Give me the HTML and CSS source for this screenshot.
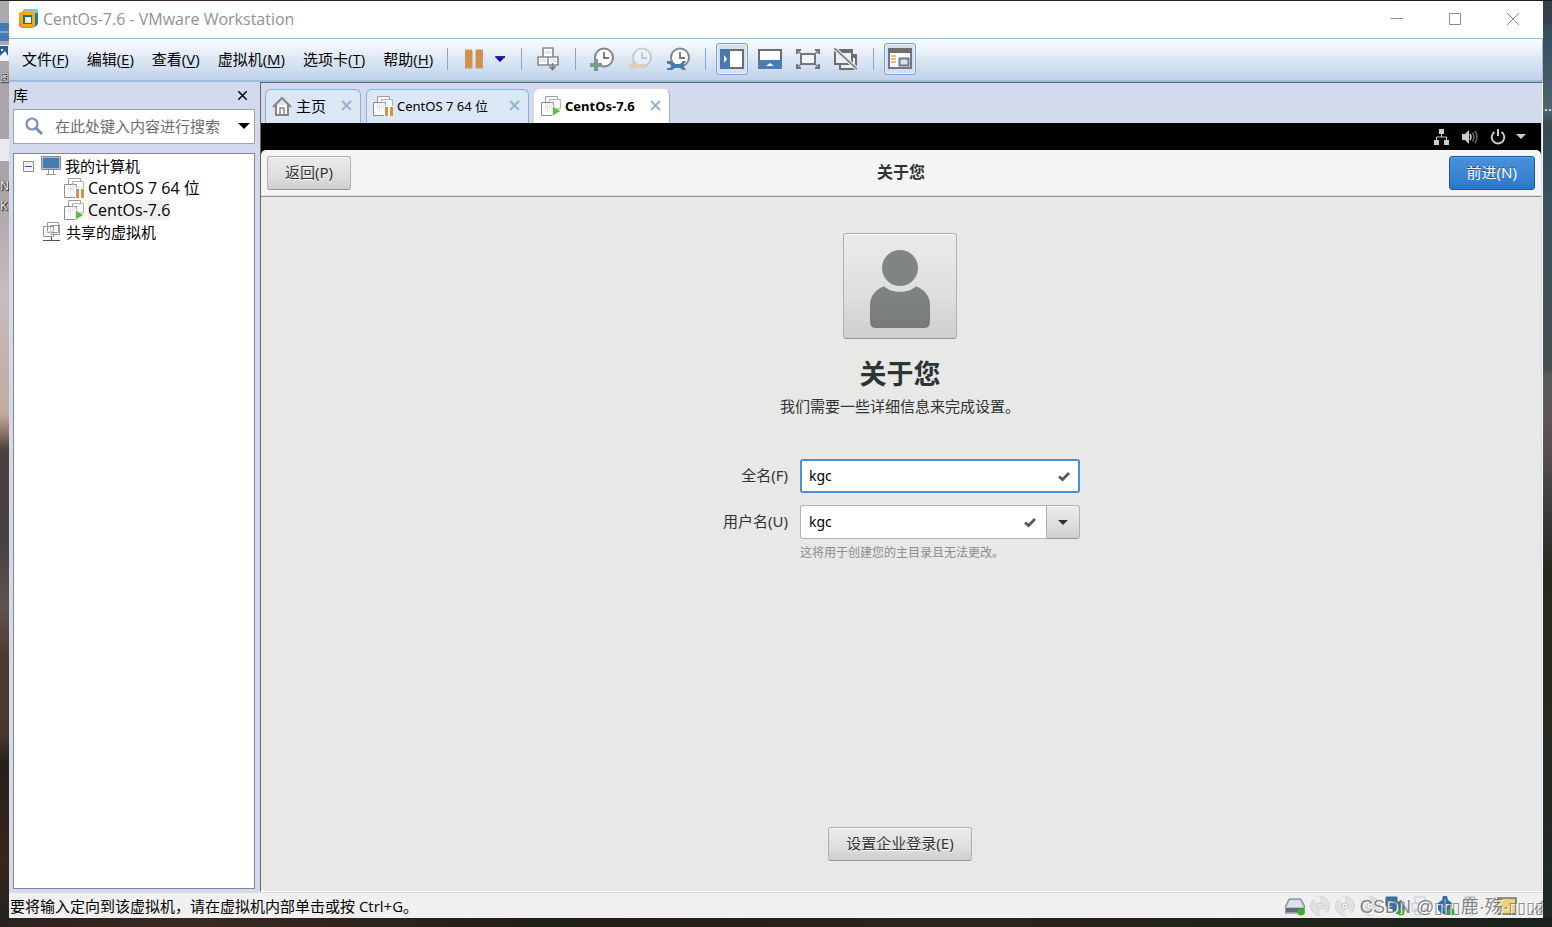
FILE: index.html
```html
<!DOCTYPE html>
<html lang="zh-CN">
<head>
<meta charset="utf-8">
<title>CentOs-7.6 - VMware Workstation</title>
<link rel="stylesheet" href="styles.css">
</head>
<body>
<svg class="defs" aria-hidden="true">
  <symbol id="vm" viewBox="0 0 20 20">
    <path d="M4.500 .5h12v12h-12z" fill="#fff" stroke="#a0a0a0"/>
    <path d="M8.500 3.500h11v9h-11z" fill="#fff" stroke="#b5b5b5"/>
    <path d="M.5 6.500h12v13H.5z" fill="#fff" fill-opacity=".8" stroke="#8c8c8c"/>
    <path d="M3.500 10.500h7M6.500 8v8M9.500 4v5h6" fill="none" stroke="#dde1ec"/>
  </symbol>
  <symbol id="vm-pause" viewBox="0 0 20 20"><use href="#vm"/><path d="M11 10h9v10h-9z" fill="#fff"/><path d="M12 11h3v9h-3zM17 11h3v9h-3z" fill="#d0914a"/></symbol>
  <symbol id="vm-play" viewBox="0 0 20 20"><use href="#vm"/><path d="M11.500 10v10l8.500-5z" fill="#5bc043" stroke="#fff" stroke-width=".6"/></symbol>
  <symbol id="clock" viewBox="0 0 24 24"><circle cx="14" cy="10.500" r="9" fill="#fff" stroke="#858585" stroke-width="2"/><path d="M14 5v6h5" fill="none" stroke="#777" stroke-width="1.800"/></symbol>
  <symbol id="x" viewBox="0 0 11 11"><path d="M1 1l9 9M10 1l-9 9" fill="none" stroke="currentColor" stroke-width="2"/></symbol>
  <symbol id="check" viewBox="0 0 12 12"><path d="M1 6.500l3.500 3L11 3" fill="none" stroke="#555a5b" stroke-width="2.800"/></symbol>
  <symbol id="disc" viewBox="0 0 20 20"><circle cx="10" cy="10" r="9.500" fill="#dfe0e1" stroke="#cfd1d3"/><path d="M10 10L3 3a10 10 0 0 1 7-2.500zM10 10l7 7a10 10 0 0 1-7 2.500z" fill="#eeeeee"/><circle cx="10" cy="10" r="3" fill="#f4f4f4" stroke="#c5c7ca"/><circle cx="10" cy="10" r="1" fill="#bbb"/></symbol>
</svg>

<div class="desktop">
  <div class="edge edge-left">
    <i class="bluebar"></i>
    <svg class="thumb" width="9" height="16" viewBox="0 0 9 16"><path d="M0 0h9v16H0z" fill="#eef2fa"/><path d="M0 1h8v14H0z" fill="#2d5b9c"/><path d="M0 11l5-5 3 5v4H0z" fill="#f2f5ff"/><path d="M1 4h2v2H1z" fill="#fff"/></svg>
    <span class="desk-label label-a">图</span>
    <i class="paper"></i>
    <span class="desk-label label-b">N</span>
    <span class="desk-label label-c">K</span>
  </div>

  <div class="window">
    <header class="titlebar">
      <svg width="20" height="20" viewBox="0 0 20 20"><rect x="4" y="0" width="15" height="16" rx="3" fill="#43a5bb"/><path d="M6 0h10q3 0 3 3l-3 1H5z" fill="#7ecbd6"/><path d="M19 4v9q0 4-4 5l-3 1 4-4V5z" fill="#16809b"/><rect x="0" y="3" width="16" height="15" rx="2" fill="#f6a719"/><path d="M0 12l3 6h10l3-2-3 3H4q-4-1-4-4z" fill="#e07f13"/><path d="M4 6h9v9H4z" fill="#1d7188"/><path d="M6 8h6v6H6z" fill="#f3e7ae"/><path d="M8 9h3v3H8z" fill="#fff"/></svg>
      <h1>CentOs-7.6 - VMware Workstation</h1>
      <div class="window-buttons">
        <button aria-label="最小化"><svg width="12" height="12"><path d="M0 5.500h12" stroke="#8d8d8d"/></svg></button>
        <button aria-label="最大化"><svg width="12" height="12"><path d="M.5 .5h11v11H.5z" fill="none" stroke="#8d8d8d"/></svg></button>
        <button aria-label="关闭"><svg width="12" height="12"><path d="M0 0l12 12M12 0L0 12" stroke="#8d8d8d"/></svg></button>
      </div>
    </header>

    <div class="toolbar">
      <nav class="menu">
        <button>文件(<u>F</u>)</button><button>编辑(<u>E</u>)</button><button>查看(<u>V</u>)</button><button>虚拟机(<u>M</u>)</button><button>选项卡(<u>T</u>)</button><button>帮助(<u>H</u>)</button>
      </nav>
      <div class="tools">
        <button aria-label="挂起"><svg width="18" height="20"><path d="M0 1h7v18H0zM11 1h7v18h-7z" fill="#d0914a" stroke="#c99c69" stroke-width="1"/></svg></button>
        <button class="narrow" aria-label="电源选项"><svg width="10" height="6"><path d="M0 1h10L5 6z" fill="#00c"/><path d="M0 0h10v2H1z" fill="#334"/></svg></button>
      </div>
      <div class="tools">
        <button aria-label="发送 Ctrl+Alt+Del"><svg width="22" height="24" viewBox="0 0 22 24"><g fill="#fff" stroke="#898989" stroke-width="1.600"><path d="M6 1h10v9H6zM1 10h10v8H1zM11 10h10v8H11z"/><path d="M15.500 16v6M12.500 19.500l3 3 3-3" fill="none" stroke="#777"/></g><path d="M8 4h6v3H8zM3 12h6v3H3zM13 12h6v3h-6z" fill="#dbe7f5"/></svg></button>
      </div>
      <div class="tools">
        <button aria-label="拍摄快照"><svg width="24" height="24" viewBox="0 0 24 24"><use href="#clock"/><path d="M4 12h4v4h4v4H8v4H4v-4H0v-4h4z" fill="#7b9a8a"/></svg></button>
        <button aria-label="恢复快照" disabled><svg width="24" height="24" viewBox="0 0 24 24"><g opacity=".3"><use href="#clock"/></g><path d="M0 19l6-5v3h11v4H6v3z" fill="#e2cdb8"/></svg></button>
        <button aria-label="管理快照"><svg width="24" height="24" viewBox="0 0 24 24"><use href="#clock"/><path d="M1 14h5l3 3h5l3-3h3l-2 3v3l2 3h-3l-3-2H9l-3 2H1v-2h3l1-2-1-2H1z" fill="#477caf"/></svg></button>
      </div>
      <div class="tools">
        <button class="on" aria-label="显示库" aria-pressed="true"><svg width="24" height="20"><path d="M1 1h22v18H1z" fill="#fff" stroke="#6d6d6d" stroke-width="2"/><path d="M0 0h10v20H0z" fill="#4679ae"/><path d="M4 6l3 4-3 4z" fill="#fff"/></svg></button>
        <button aria-label="显示缩略图栏"><svg width="24" height="20"><path d="M1 1h22v18H1z" fill="#fff" stroke="#6d6d6d" stroke-width="2"/><path d="M0 11h24v9H0z" fill="#4a7db0"/><path d="M8 17l4-3 4 3z" fill="#fff"/></svg></button>
        <button aria-label="全屏"><svg width="24" height="20"><g fill="none" stroke="#777" stroke-width="2"><path d="M5 5h14v10H5z" fill="#f1f5fb"/><path d="M1 5V1h4M19 1h4v4M23 15v4h-4M5 19H1v-4"/><path d="M1 1l4 4M23 1l-4 4M1 19l4-4M23 19l-4-4" stroke-width="1.500"/></g></svg></button>
        <button aria-label="Unity"><svg width="24" height="22"><path d="M6 7h16v14H6z" fill="#e9f0fa" stroke="#6d6d6d" stroke-width="2"/><path d="M5 6h18v4H5z" fill="#6d6d6d"/><path d="M1 2h17v14H1z" fill="#e9f0fa" stroke="#6d6d6d" stroke-width="2"/><path d="M0 1h19v4H0z" fill="#6d6d6d"/><path d="M0 0l23 21" stroke="#eef4fb" stroke-width="4"/><path d="M0 0l23 21" stroke="#888" stroke-width="2"/></svg></button>
      </div>
      <div class="tools">
        <button class="on" aria-label="控制台视图" aria-pressed="true"><svg width="24" height="21"><path d="M1 1h22v19H1z" fill="#fff" stroke="#777" stroke-width="2"/><path d="M0 0h24v5H0z" fill="#6f6f6f"/><path d="M3 8h5M3 11h5M3 14h5" stroke="#e4bd75" stroke-width="2"/><path d="M11.500 10.500h9v7h-9z" fill="#d5e2f4" stroke="#6d7784" stroke-width="2"/></svg></button>
      </div>
    </div>

    <div class="work">
      <aside class="library">
        <div class="library-head"><h2>库</h2><button aria-label="关闭库"><svg width="9" height="9" viewBox="0 0 9 9"><path d="M0 0l9 9M9 0L0 9" stroke="#000" stroke-width="1.500"/></svg></button></div>
        <div class="search">
          <svg width="18" height="18" viewBox="0 0 18 18"><circle cx="7" cy="7" r="5.500" fill="none" stroke="#7790b7" stroke-width="2.200"/><path d="M11 11l6 6" stroke="#7790b7" stroke-width="3"/></svg>
          <input type="text" aria-label="搜索" placeholder="在此处键入内容进行搜索">
          <button aria-label="搜索选项"><svg width="12" height="6"><path d="M0 0h12L6 6z"/></svg></button>
        </div>
        <ul class="tree">
          <li><div class="row"><button aria-label="折叠"><svg width="11" height="11"><path d="M.5 .5h10v10H.5z" fill="#f5f5f5" stroke="#8e8e8e"/><path d="M2 5.500h7" stroke="#3b56a4"/></svg></button>
            <svg width="20" height="20"><path d="M1 1h18v12H1z" fill="#477aaf" stroke="#fff"/><path d="M.5 .5h19v13H.5z" fill="none" stroke="#858585"/><path d="M7.500 14v4M12.500 14v4M5 18.500h10" stroke="#999"/></svg><span>我的计算机</span></div>
            <ul>
              <li class="row"><svg width="20" height="20"><use href="#vm-pause"/></svg><span>CentOS 7 64 位</span></li>
              <li class="row"><svg width="20" height="20"><use href="#vm-play"/></svg><span class="selected">CentOs-7.6</span></li>
            </ul>
          </li>
          <li class="row shared"><svg width="20" height="20"><path d="M5.500 .5h11v10h-11zM1.500 4.500h10v10h-10zM8.500 3.500h9v9h-9z" fill="#fff" stroke="#999"/><path d="M4 9.500h8M8.500 6v7" stroke="#d5d9e5"/><path d="M9.500 15v4M1 18.500h6M12 18.500h6M7 18.500h5" stroke="#555"/></svg><span>共享的虚拟机</span></li>
        </ul>
      </aside>

      <main class="console">
        <nav class="tabs">
          <div class="tab tab-home"><svg width="20" height="20"><path d="M4 9v10h12V9" fill="#fff" stroke="#858585" stroke-width="2"/><path d="M1 11l9-9 9 9" fill="none" stroke="#858585" stroke-width="2"/><path d="M8 19v-7h4v7" fill="none" stroke="#858585" stroke-width="1.500"/></svg><span>主页</span><button aria-label="关闭主页"><svg width="11" height="11"><use href="#x"/></svg></button></div>
          <div class="tab tab-vm"><svg width="20" height="20"><use href="#vm-pause"/></svg><span>CentOS 7 64 位</span><button aria-label="关闭 CentOS 7"><svg width="11" height="11"><use href="#x"/></svg></button></div>
          <div class="tab tab-active"><svg width="20" height="20"><use href="#vm-play"/></svg><span>CentOs-7.6</span><button aria-label="关闭 CentOs-7.6"><svg width="11" height="11"><use href="#x"/></svg></button></div>
        </nav>

        <section class="guest">
          <div class="guest-top">
            <svg width="16" height="16"><path d="M5 0h5v5H5zM0 11h5v5H0zM10 11h5v5h-5z" fill="#ccc"/><path d="M7.500 5v3M2.500 11V8h10v3" fill="none" stroke="#ccc"/></svg>
            <svg width="16" height="14"><path d="M0 4h3l4-4v14l-4-4H0z" fill="#ccc"/><path d="M8 4q2 3 0 6" fill="none" stroke="#ccc" stroke-width="1.500"/><path d="M10.500 2.500q3 4.500 0 9M13 1q4 6 0 12" fill="none" stroke="#666" stroke-width="1.500"/></svg>
            <svg width="16" height="16"><path d="M4.500 3a6.300 6.300 0 1 0 7 0M8 0v7" fill="none" stroke="#ccc" stroke-width="2"/></svg>
            <svg class="caret" width="10" height="5"><path d="M0 0h10L5 5z" fill="#ccc"/></svg>
          </div>
          <header class="guest-head">
            <button class="gtk back">返回(P)</button>
            <h2>关于您</h2>
            <button class="gtk next">前进(N)</button>
          </header>
          <div class="guest-body">
            <button class="gtk avatar" aria-label="头像"><svg width="60" height="78" viewBox="0 0 60 78"><defs><linearGradient id="ag" x1="0" y1="0" x2="0" y2="1"><stop offset="0" stop-color="#828585"/><stop offset="1" stop-color="#777a7a"/></linearGradient></defs><circle cx="30" cy="18" r="18" fill="#818484"/><path d="M14.500 36.500C21 43.500 39 43.500 45.500 36.500 53 38 60 46 60 54v18q0 6-6 6H6q-6 0-6-6V54c0-8 7-16 14.500-17.500z" fill="url(#ag)"/></svg></button>
            <h3>关于您</h3>
            <p class="lead">我们需要一些详细信息来完成设置。</p>
            <form class="form">
              <label for="fullname">全名(F)</label>
              <div class="entry focused"><input id="fullname" type="text" value="kgc"><svg width="12" height="12"><use href="#check"/></svg></div>
              <label for="username">用户名(U)</label>
              <div class="combo"><div class="entry"><input id="username" type="text" value="kgc"><svg width="12" height="12"><use href="#check"/></svg></div><button type="button" class="gtk drop" aria-label="选择用户名"><svg width="10" height="5"><path d="M0 0h10L5 5z" fill="#2e3436"/></svg></button></div>
              <p class="hint">这将用于创建您的主目录且无法更改。</p>
            </form>
            <button class="gtk enterprise">设置企业登录(E)</button>
          </div>
        </section>
      </main>
    </div>

    <footer class="statusbar">
      <span>要将输入定向到该虚拟机，请在虚拟机内部单击或按 Ctrl+G。</span>
      <div class="devices">
        <svg width="20" height="20"><path d="M4 3h12l4 8v6H0v-6z" fill="#b9c1cc" stroke="#717b88"/><path d="M5 4h10l3 7H2z" fill="#dde2e9"/><path d="M1 12h18v4H1z" fill="#626c78"/><circle cx="16" cy="16" r="3.500" fill="#38b51c"/></svg>
        <svg width="20" height="20"><use href="#disc"/></svg>
        <svg width="20" height="20"><use href="#disc"/></svg>
        <svg width="20" height="20"><use href="#disc"/></svg>
        <svg width="20" height="20"><path d="M1 1h11v9H1zM8 6h11v9H8z" fill="#2878b8" stroke="#476783"/><path d="M4 12h4M11 17h5" stroke="#667" stroke-width="2"/><circle cx="16" cy="16" r="3.500" fill="#38b51c"/></svg>
        <svg width="20" height="20"><path d="M5 1h10v6H5zM2 7h16v8H2zM5 13h10v6H5z" fill="#eceef2" stroke="#c5c8d2"/></svg>
        <svg width="20" height="20"><path d="M8 0h4l1 4 4 3v7l-4 4H7l-4-4V7l4-3z" fill="#2d6ea9"/><path d="M10 3v13M6 8l4 4 4-4" fill="none" stroke="#9ec7e8"/><circle cx="16" cy="16" r="3.500" fill="#38b51c"/></svg>
        <svg width="20" height="20"><path d="M5 1h10v10H5zM7 11h6v8H7z" fill="#dde2ea" stroke="#a7b0bf"/></svg>
        <svg class="note" width="20" height="18"><path d="M1 1h18v16H1z" fill="#f0cf82" stroke="#77705f" stroke-width="1.500"/></svg>
        <svg class="grip" width="12" height="14"><path d="M0 14L12 2M5 14l7-7M9 14l3-3" stroke="#888" stroke-width="1.500"/></svg>
      </div>
      <div class="watermark">CSDN @<span class="boxes">▯▯▯</span>鹿·殇·<span class="boxes">▯▯▯▯</span></div>
    </footer>
  </div>
  <div class="edge edge-right"><span class="dots">..</span></div>
</div>
</body>
</html>
```

FILE: styles.css
```css
* { box-sizing: border-box; }
body, h1, h2, h3, p, ul { margin: 0; padding: 0; }
h1, h2, h3 { font-size: 15px; font-weight: 400; }
ul { list-style: none; }
svg { display: block; flex: none; }
.defs { position: absolute; width: 0; height: 0; }

body {
  font: 15px/20px "Open Sans", "Noto Sans CJK SC", sans-serif;
  color: #000;
}
button, input { font: inherit; color: inherit; }
button { background: none; border: 0; padding: 0; display: flex; align-items: center; justify-content: center; }
input { border: 0; outline: 0; padding: 0; background: none; min-width: 0; }

.desktop {
  display: grid;
  grid-template-columns: 9px minmax(0, 1fr) 9px;
  height: 100vh;
  padding: 1px 0 9px;
  overflow: hidden;
  background: linear-gradient(90deg, #2b211d, #3a2920 12%, #211f19 35%, #2b241c 60%, #1a211d);
}
.edge { position: relative; overflow: hidden; }
.edge-left { background: linear-gradient(#aaa9af, #a9a4a8 20%, #c8bcbc 32%, #c2aaa0 45%, #8f7768 47%, #493f3b 49%, #46413f 59%, #61534d 66%, #4b382f 72%, #4a382e 80%, #25211a 83%, #3b241b 94%, #20241f); }
.edge-right { background: linear-gradient(#34414c, #34414c 23px, #344c5a 24px, #4c6570 110px, #3a474e 124px, #354d5a 153px, #38515e 200px, #41505a 28%, #42504f 40%, #5c5c5d 41%, #5c5150 48%, #414043 54%, #29281f 62%, #202b24); }
.bluebar { position: absolute; top: 22px; left: 0; width: 9px; height: 18px; background: linear-gradient(#447bb5 8px, #8ba6c5 8px 10px, #447bb5 10px); }
.thumb { position: absolute; top: 44px; left: 0; }
.paper { position: absolute; top: 138px; left: 0; width: 9px; height: 22px; background: #e9eaec; }
.desk-label { position: absolute; left: 0; color: #fff; text-shadow: 1px 1px 1px #000, 0 0 2px #000; font-size: 12px; line-height: 18px; }
.label-a { top: 68px; font-size: 9px; }
.label-b { top: 176px; }
.label-c { top: 196px; }
.dots { position: absolute; top: 94px; left: 1px; color: #fff; font-size: 15px; }

.window { display: flex; flex-direction: column; min-height: 0; background: #f0f0f0; }

.titlebar { display: flex; align-items: center; gap: 4px; flex: none; height: 37px; padding: 0 1px 1px 10px; background: #fff; color: #929292; }
.titlebar h1 { font-size: 16px; }
.window-buttons { display: flex; margin-left: auto; }
.window-buttons button { width: 58px; height: 36px; }

.toolbar { display: flex; align-items: center; flex: none; height: 44px; padding: 0 0 2px 13px; border: 1px solid #9dbce0; border-width: 1px 1px 2px 0; background: linear-gradient(#fbfdff, #dce7f4 50%, #bfd2eb); }
.menu { display: flex; gap: 18px; margin-right: 14px; }
.menu button { white-space: nowrap; }
.menu u { text-underline-offset: 2px; }
.tools { display: flex; align-items: center; gap: 6px; padding-right: 11px; }
.tools::before { content: ""; width: 1px; height: 22px; background: #84a6cf; margin-right: 4px; }
.tools button { width: 32px; height: 32px; }
.tools .narrow { width: 20px; margin-left: -6px; }
.tools .on { border: 1px solid #7ba2d3; border-radius: 3px; background: #cfe0f8; box-shadow: inset 0 0 0 1px #e8f1fd; }

.work { display: grid; grid-template-columns: 251px minmax(0, 1fr); flex: 1; min-height: 0; }
.library { display: flex; flex-direction: column; min-height: 0; padding: 0 5px 3px 4px; background: #d4daed; }
.library-head { display: flex; align-items: center; justify-content: space-between; height: 27px; padding-right: 8px; }
.library-head h2 { padding-bottom: 2px; }
.search { display: flex; align-items: center; height: 35px; padding: 0 4px 2px 11px; border: 1px solid #a3a3a3; background: #fff; }
.search input { flex: 1; margin-left: 12px; }
.search input::placeholder { color: #6d6d6d; opacity: 1; }
.tree { flex: 1; margin-top: 9px; padding: 1px 0 0 9px; border: 1px solid #82869a; background: #fff; white-space: nowrap; }
.row { display: flex; align-items: center; gap: 4px; height: 22px; }
.row button { margin-right: 3px; }
.tree ul { padding-left: 41px; font-size: 16px; }
.shared { padding-left: 19px; }
.selected { background: #f0f0f0; }

.console { display: flex; flex-direction: column; min-width: 0; min-height: 0; padding-right: 1px; border: 1px solid #fff; border-left-color: #646464; border-top-color: #646464; background: #d4daed; }
.tabs { display: flex; align-items: flex-end; gap: 5px; flex: none; height: 40px; padding-left: 4px; }
.tab { display: flex; align-items: center; gap: 4px; height: 34px; padding: 0 8px 2px 6px; border: 1px solid #8fb1d3; border-bottom: 0; border-radius: 6px 6px 0 0; background: #dbe7f5; white-space: nowrap; font-size: 15px; }
.tab button { margin-left: auto; color: #93b3d0; }
.tab-home { width: 96px; }
.tab-vm { width: 163px; font-family: "Noto Sans", "Noto Sans CJK SC", sans-serif; font-size: 13px; }
.tab-active { width: 136px; border-color: #fff #8fb1d3 #fff #fff; background: #fff; font-family: "Noto Sans", sans-serif; font-size: 13px; font-weight: 700; }

.guest { display: flex; flex-direction: column; flex: 1; min-height: 0; background: #000; color: #2e3436; font-family: "Noto Sans", "Noto Sans CJK SC", sans-serif; }
.guest-top { display: flex; align-items: center; justify-content: flex-end; gap: 12px; flex: none; height: 27px; padding-right: 15px; }
.caret { margin-left: -2px; }
.guest-head { display: grid; grid-template-columns: 1fr auto 1fr; align-items: center; flex: none; height: 47px; padding: 0 6px; border-bottom: 1px solid #92928f; border-radius: 5px 5px 0 0; background: #f4f4f4; box-shadow: inset 0 -1px #dededc; }
.guest-head h2 { padding-bottom: 2px; font-size: 16px; font-weight: 700; }
.gtk { height: 34px; padding: 0 17px 2px; border: 1px solid #b0b0ae; border-bottom-color: #949492; border-radius: 3px; background: linear-gradient(#ebebea, #dededd 60%, #cececc); box-shadow: inset 0 1px #fafafa; text-shadow: 0 1px #fff; white-space: nowrap; }
.back { justify-self: start; }
.next { justify-self: end; border-color: #1c5899; background: linear-gradient(#4a90d9, #3984d3 60%, #2a76c6); box-shadow: inset 0 1px #64a2e0; color: #fff; text-shadow: 0 -1px #1c5187; }
.guest-body { display: flex; flex-direction: column; align-items: center; flex: 1; min-height: 0; padding: 36px 2px 30px 0; background: #e8e8e6; }
.avatar { width: 114px; height: 106px; padding: 6px 0 0; flex: none; }
.guest-body h3 { margin-top: 18px; font-size: 27px; line-height: 34px; font-weight: 700; }
.lead { margin-top: 5px; }
.form { display: grid; grid-template-columns: 68px 280px; gap: 12px; align-items: center; margin-top: 43px; }
.form label { text-align: right; white-space: nowrap; padding-bottom: 2px; }
.entry { display: flex; align-items: center; flex: 1; min-width: 0; height: 34px; padding: 0 10px 0 8px; border: 1px solid #b3b3b0; border-radius: 3px; background: #fff; color: #000; font-size: 14px; }
.entry input { flex: 1; }
.focused { padding: 0 8px 0 7px; border: 2px solid #4a90d9; }
.combo { display: flex; }
.combo .entry { border-right: 0; border-radius: 3px 0 0 3px; }
.drop { width: 34px; padding: 0; border-radius: 0 3px 3px 0; }
.hint { grid-column: 2; margin-top: -8px; font-size: 12px; color: #8b8e8f; }
.enterprise { margin-top: auto; }

.statusbar { position: relative; display: flex; align-items: center; justify-content: space-between; flex: none; height: 26px; padding-left: 1px; border-top: 1px solid #d9d9d9; background: #f0f0f0; }
.devices { display: flex; align-items: center; gap: 5px; }
.note { margin-left: 12px; }
.grip { margin-left: 9px; }
.watermark { position: absolute; right: -1px; bottom: 0; color: #666c; text-shadow: 1px 1px #fff; font-family: "Liberation Sans", "Noto Sans CJK SC", sans-serif; font-size: 18px; line-height: 20px; white-space: nowrap; }
.boxes { font-family: "DejaVu Sans", sans-serif; font-size: 16px; }
```
